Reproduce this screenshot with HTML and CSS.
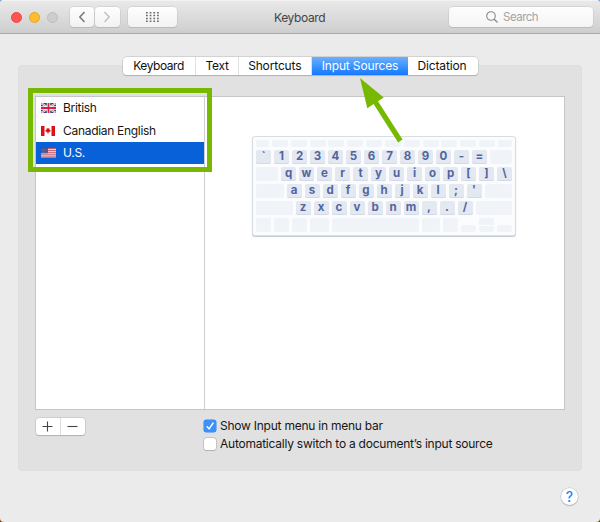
FILE: index.html
```html
<!DOCTYPE html>
<html lang="en">
<head>
<meta charset="utf-8">
<title>Keyboard</title>
<link rel="stylesheet" href="styles.css">
</head>
<body>
<div class="window">
  <header class="titlebar">
    <div class="lights"><i class="light red"></i><i class="light yellow"></i><i class="light off"></i></div>
    <div class="nav">
      <button class="btn"><svg width="8" height="12" viewBox="0 0 8 12"><path d="M6.5 1L1.8 6l4.7 5" fill="none" stroke="#777" stroke-width="1.5"/></svg></button>
      <button class="btn"><svg width="8" height="12" viewBox="0 0 8 12"><path d="M1.5 1l4.7 5-4.7 5" fill="none" stroke="#bdbdbd" stroke-width="1.3"/></svg></button>
    </div>
    <button class="btn grid-btn"><svg width="14" height="10" viewBox="0 0 14 10"><path d="M0 .8h14M0 3.600h14M0 6.400h14M0 9.200h14" stroke="#666" stroke-width="1.500" stroke-dasharray="1.700 2"/></svg></button>
    <h1 class="title">Keyboard</h1>
    <div class="search"><svg width="12" height="12" viewBox="0 0 12 12"><circle cx="5" cy="5" r="4.3" fill="none" stroke="#888" stroke-width="1.1"/><path d="M8 8l3.5 3.5" stroke="#888" stroke-width="1.3"/></svg><span>Search</span></div>
  </header>

  <nav class="tabs">
    <span class="tab t-keyboard">Keyboard</span><span class="tab t-text">Text</span><span class="tab t-shortcuts">Shortcuts</span><span class="tab active">Input Sources</span><span class="tab t-dictation">Dictation</span>
  </nav>

  <main class="panel">
    <div class="split">
      <div class="sources">
        <div class="source">
          <svg width="15" height="10" viewBox="0 0 15 10"><path fill="#34427f" d="M0 0h15v10H0z"/><path d="M0 0l15 10M15 0L0 10" stroke="#fff" stroke-width="2"/><path d="M0 0l15 10M15 0L0 10" stroke="#d4364b" stroke-width=".7"/><path d="M7.5 0v10M0 5h15" stroke="#fff" stroke-width="3.4"/><path d="M7.5 0v10M0 5h15" stroke="#d3243c" stroke-width="1.8"/></svg>
          <span>British</span>
        </div>
        <div class="source">
          <svg width="15" height="10" viewBox="0 0 15 10"><path fill="#fff" d="M0 0h14v10H0z"/><path fill="#dc1018" d="M0 0h3.5v10H0zM10.500 0H14v10h-3.500zM7 1.500l.8 1.300.9-.3-.2 1.500 1.500.5-1.700 1.800-1 .2v1.800h-.6V6.500l-1-.2L4 4.500 5.500 4l-.2-1.500.9.300z"/></svg>
          <span>Canadian English</span>
        </div>
        <div class="source selected">
          <svg width="15" height="10" viewBox="0 0 15 10"><path fill="#f1e5ea" d="M0 0h15v10H0z"/><path d="M0 .5h15M0 2.400h15M0 4.300h15M0 6.200h15M0 8.100h15M0 9.700h15" stroke="#b94057" stroke-width=".85"/><path fill="#424a83" d="M0 0h7v5.200H0z"/><path d="M.7 1.300h6M.7 2.900h6M.7 4.300h6" stroke="#a8aecb" stroke-width=".6" stroke-dasharray=".7"/></svg>
          <span>U.S.</span>
        </div>
      </div>
      <div class="preview">
        <div class="keyboard">
          <div class="row fn"><i class="f first"></i><i class="f"></i><i class="f"></i><i class="f"></i><i class="f"></i><i class="f"></i><i class="f"></i><i class="f"></i><i class="f"></i><i class="f"></i><i class="f"></i><i class="f"></i><i class="f"></i><i class="f last"></i></div>
          <div class="row"><b>`</b><b>1</b><b>2</b><b>3</b><b>4</b><b>5</b><b>6</b><b>7</b><b>8</b><b>9</b><b>0</b><b>-</b><b>=</b><i class="wide"></i></div>
          <div class="row"><i class="wide"></i><b>q</b><b>w</b><b>e</b><b>r</b><b>t</b><b>y</b><b>u</b><b>i</b><b>o</b><b>p</b><b>[</b><b>]</b><b>\</b></div>
          <div class="row"><i class="caps"></i><b>a</b><b>s</b><b>d</b><b>f</b><b>g</b><b>h</b><b>j</b><b>k</b><b>l</b><b>;</b><b>'</b><i class="wide"></i></div>
          <div class="row"><i class="shift"></i><b>z</b><b>x</b><b>c</b><b>v</b><b>b</b><b>n</b><b>m</b><b>,</b><b>.</b><b>/</b><i class="wide"></i></div>
          <div class="row bottom"><i></i><i></i><i></i><i class="cmd"></i><i class="wide"></i><i class="cmd"></i><i></i><i class="half"></i><div class="stack"><i></i><i></i></div><i class="half"></i></div>
        </div>
      </div>
    </div>
    <div class="controls">
      <div class="addremove">
        <span><svg width="11" height="11" viewBox="0 0 11 11"><path d="M5.500 .5v10M.5 5.500h10" stroke="#444" stroke-width="1.1"/></svg></span><span><svg width="11" height="11" viewBox="0 0 11 11"><path d="M.5 5.500h10" stroke="#444" stroke-width="1.1"/></svg></span>
      </div>
      <div class="checks">
        <label class="check"><span class="box on"><svg width="12" height="12" viewBox="0 0 12 12"><path d="M2.700 6.300l2.400 2.600 4.300-6.300" fill="none" stroke="#fff" stroke-width="1.500"/></svg></span><span>Show Input menu in menu bar</span></label>
        <label class="check"><span class="box"></span><span>Automatically switch to a document’s input source</span></label>
      </div>
    </div>
  </main>

  <footer class="footer"><button class="help">?</button></footer>
</div>

<div class="highlight"></div>
<svg class="arrow" width="600" height="522" viewBox="0 0 600 522"><path fill="#76b900" d="M360 78l23.700 19.500-5.700 3.700 24.500 38.400-4.400 2.800-24.500-38.400-6.300 4.300z"/></svg>
</body>
</html>
```
FILE: styles.css
```css
* { box-sizing: border-box; }
body {
  margin: 0;
  width: 600px;
  height: 522px;
  overflow: hidden;
  background: linear-gradient(#86a7d0 0 50%, transparent 50%), linear-gradient(90deg, #7c4a20 50%, #5d5a20 50%);
  font: 12px/16px Inter, "Liberation Sans", sans-serif;
  color: #161616;
}
i, b { font-style: normal; }
svg { display: block; flex: none; }
span { white-space: nowrap; }
button { font: inherit; padding: 0; border: 0; }

.window { height: 522px; background: #ebebeb; border-radius: 4px; overflow: hidden; }

.titlebar {
  height: 34px;
  display: flex;
  align-items: center;
  padding: 0 7px 0 11px;
  background: linear-gradient(#e9e9e9, #cecece);
  border-top: 1px solid #f3f3f3;
  border-bottom: 1px solid #a9a9a9;
}
.lights { display: flex; gap: 7px; width: 58.500px; }
.light { width: 11px; height: 11px; border-radius: 50%; border: 1px solid; }
.red { background: #ff5550; border-color: #e5484a; }
.yellow { background: #ffbd2e; border-color: #e3a530; }
.off { background: #cdcdcd; border-color: #bdbdbd; }
.nav { display: flex; gap: 1px; width: 58.500px; }
.btn {
  width: 24.500px;
  height: 20px;
  display: flex;
  align-items: center;
  justify-content: center;
  border-radius: 4px;
  background: linear-gradient(#fefefe, #f2f2f2);
  box-shadow: 0 0 0 .5px #c3c3c3, 0 1px 0 #b3b3b3;
}
.grid-btn { width: 49px; margin-right: 97px; }
.title { margin: 2px auto 0 0; font-size: 12px; font-weight: 400; letter-spacing: -.37px; color: #444; }
.search {
  width: 144px;
  height: 20px;
  display: flex;
  align-items: center;
  gap: 5px;
  padding-left: 37px;
  border-radius: 4px;
  background: linear-gradient(#fdfdfd, #f5f5f5);
  box-shadow: 0 0 0 .5px #c3c3c3, 0 1px 0 #b3b3b3;
  color: #a3a3a3;
  font-size: 11.500px;
  letter-spacing: -.5px;
}

.tabs {
  position: relative;
  z-index: 1;
  display: flex;
  width: 355.500px;
  height: 18px;
  margin: 23px 0 -10px 122.500px;
  border-radius: 4px;
  background: #fff;
  box-shadow: 0 0 0 .5px #b9b9b9, 0 1px 1px #aaa;
}
.tab { display: flex; justify-content: center; align-items: center; border-right: 1px solid #e0e0e0; color: #111; letter-spacing: -.15px; }
.t-keyboard { width: 73px; letter-spacing: -.45px; }
.t-text { width: 43px; padding-left: 1px; letter-spacing: -.3px; }
.t-shortcuts { width: 73.500px; }
.tab.active { width: 96px; border: 0; background: linear-gradient(#6bb0fb, #1478ff); color: #fff; }
.t-dictation { width: 70px; padding-right: 2px; border: 0; }

.panel {
  width: 564px;
  height: 406px;
  margin-left: 18px;
  padding: 31px 17px 0;
  border-radius: 4px;
  background: #e1e1e1;
  box-shadow: inset 0 0 0 1px #dedede;
}
.split { display: flex; height: 314px; border: 1px solid #c6c6c6; background: #fff; }
.sources { width: 169px; border-right: 1px solid #cfcfcf; letter-spacing: -.3px; }
.source { height: 22.500px; display: flex; align-items: center; gap: 7px; padding-left: 5px; }
.source.selected { height: 21.500px; background: #0861d8; color: #fff; }
.preview { flex: 1; padding: 39px 0 0 47px; }

.keyboard {
  width: 264px;
  height: 100px;
  padding: 3px;
  display: flex;
  flex-direction: column;
  gap: 3px;
  border: 1px solid #d8dde5;
  border-radius: 3px;
  background: #fbfcfe;
  box-shadow: 0 1px 1px #c4c9d2;
}
.row { display: flex; gap: 3px; height: 14px; }
.row i { width: 15px; border-radius: 2px; background: #f0f3f8; }
.row b {
  width: 15px;
  border-radius: 2px;
  background: #e3e8f1;
  box-shadow: inset 0 -1px #d3d9e5;
  color: #5165a0;
  font-size: 11.500px;
  line-height: 13px;
  text-align: center;
}
.row.fn { height: 7px; justify-content: space-between; gap: 0; }
.row .f { width: 16px; }
.row .first { width: 13px; }
.row .last { width: 14px; }
.row .wide { flex: 1; }
.row .caps { width: 27.500px; }
.row .shift { width: 36.500px; }
.row .cmd { width: 18.500px; }
.row .half { height: 7px; align-self: flex-end; }
.stack { display: flex; flex-direction: column; gap: 1px; }
.stack i { flex: 1; }

.controls { display: flex; padding-top: 8px; }
.addremove {
  display: flex;
  width: 49px;
  height: 17px;
  margin: 0 119.500px 0 .5px;
  border-radius: 3px;
  background: #fff;
  box-shadow: 0 0 0 .5px #bbb, 0 1px 1px #aaa;
}
.addremove span { flex: 1; display: flex; align-items: center; justify-content: center; }
.addremove span + span { border-left: 1px solid #ddd; }
.checks { margin-top: -1px; letter-spacing: -.24px; }
.check { display: flex; align-items: center; gap: 4px; height: 18px; }
.box { width: 12px; height: 12px; border-radius: 2.500px; background: #fff; box-shadow: 0 0 0 .5px #aaa, 0 1px 1px #bbb; }
.box.on { background: #3b92fb; box-shadow: 0 0 0 .5px #2e86f0; }

.footer { display: flex; justify-content: flex-end; padding: 17px 22px 0 0; }
.help {
  width: 17px;
  height: 17px;
  border-radius: 50%;
  background: #fff;
  box-shadow: 0 0 0 .5px #bbb, 0 1px 1px #aaa;
  color: #2a86fb;
  font-size: 14px;
  font-weight: 500;
  line-height: 17px;
}

.highlight { position: absolute; left: 28px; top: 88px; width: 184px; height: 84px; border: 5px solid #76b900; z-index: 2; }
.arrow { position: absolute; left: 0; top: 0; z-index: 2; pointer-events: none; }
```
